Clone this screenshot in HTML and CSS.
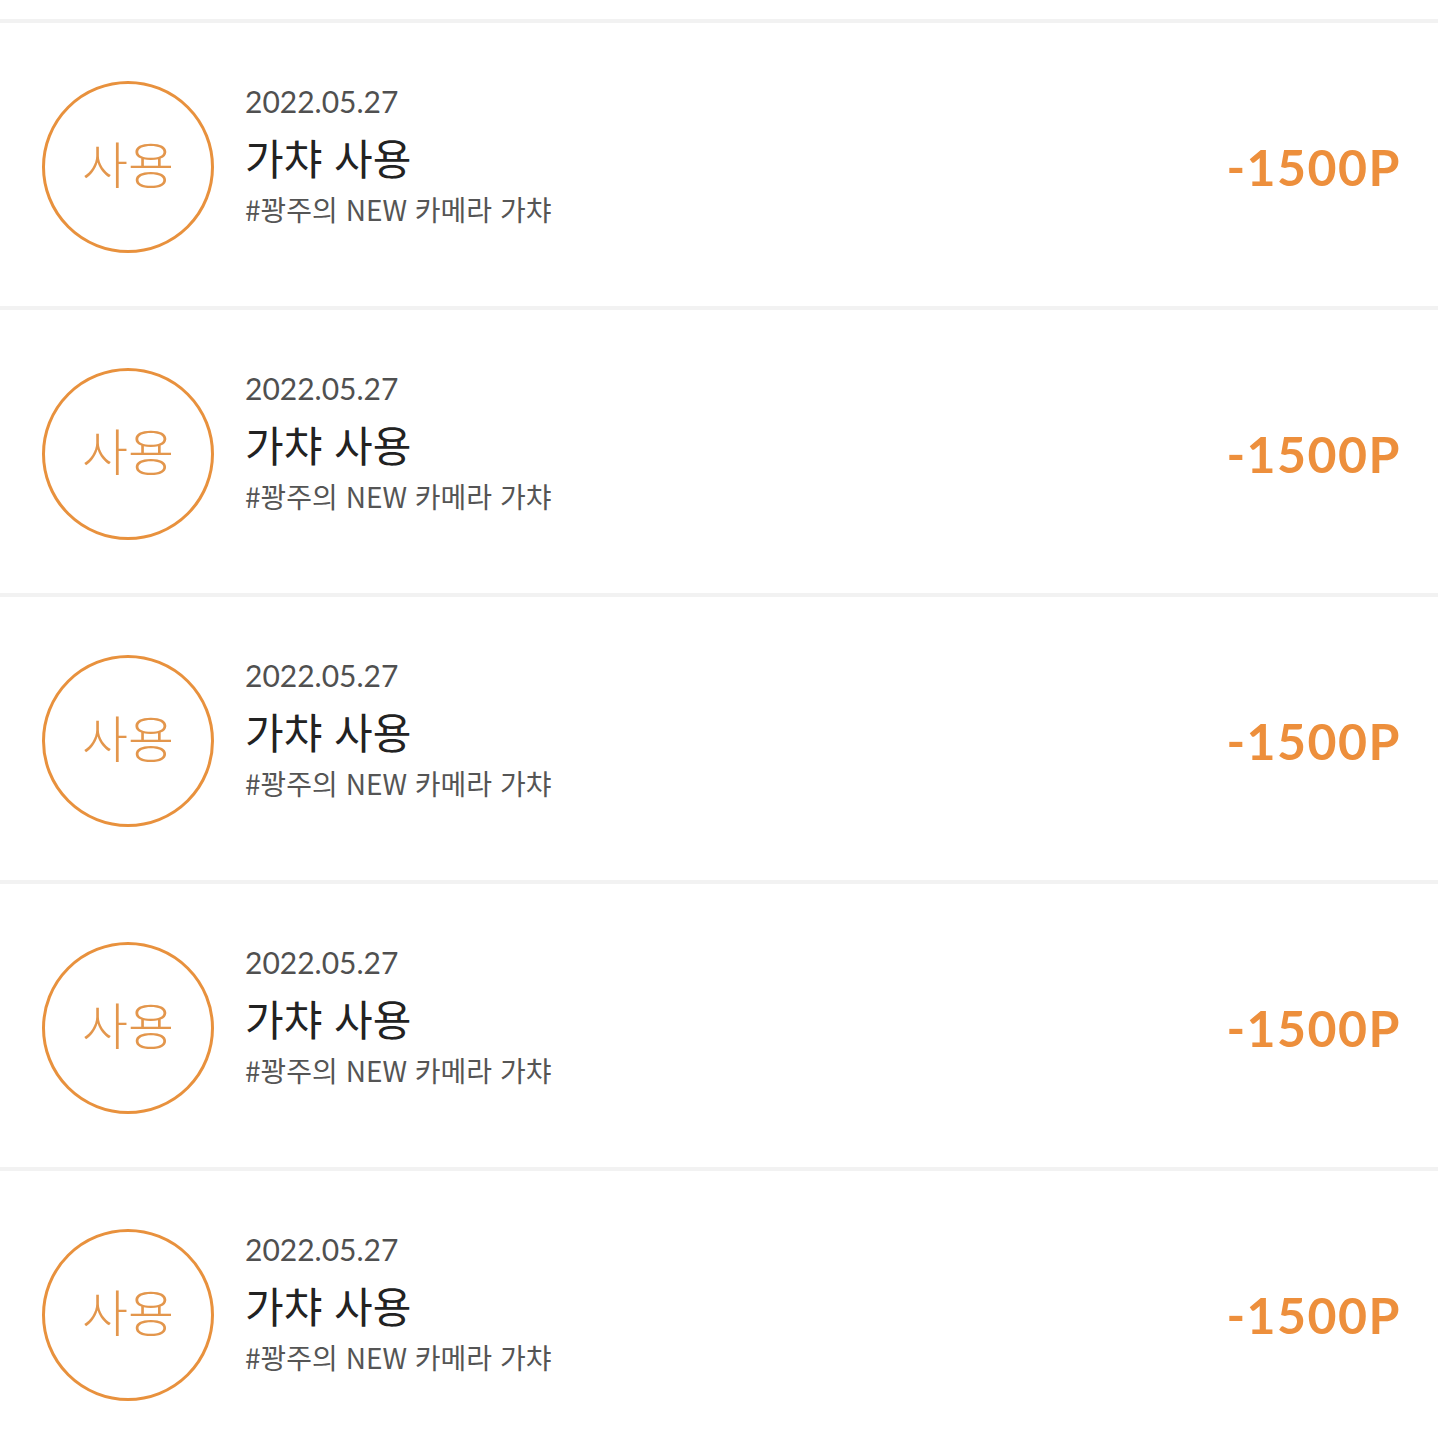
FILE: index.html
```html
<!DOCTYPE html>
<html lang="ko">
<head>
<meta charset="utf-8">
<link rel="stylesheet" href="styles.css">
</head>
<body>
<div class="top"></div>
<ul class="list">
  <li class="item">
    <div class="badge"><span>사용</span></div>
    <div class="info">
      <div class="date">2022.05.27</div>
      <div class="title">가챠 사용</div>
      <div class="tag">#꽝주의 NEW 카메라 가챠</div>
    </div>
    <div class="amount">-1500P</div>
  </li>
  <li class="item">
    <div class="badge"><span>사용</span></div>
    <div class="info">
      <div class="date">2022.05.27</div>
      <div class="title">가챠 사용</div>
      <div class="tag">#꽝주의 NEW 카메라 가챠</div>
    </div>
    <div class="amount">-1500P</div>
  </li>
  <li class="item">
    <div class="badge"><span>사용</span></div>
    <div class="info">
      <div class="date">2022.05.27</div>
      <div class="title">가챠 사용</div>
      <div class="tag">#꽝주의 NEW 카메라 가챠</div>
    </div>
    <div class="amount">-1500P</div>
  </li>
  <li class="item">
    <div class="badge"><span>사용</span></div>
    <div class="info">
      <div class="date">2022.05.27</div>
      <div class="title">가챠 사용</div>
      <div class="tag">#꽝주의 NEW 카메라 가챠</div>
    </div>
    <div class="amount">-1500P</div>
  </li>
  <li class="item">
    <div class="badge"><span>사용</span></div>
    <div class="info">
      <div class="date">2022.05.27</div>
      <div class="title">가챠 사용</div>
      <div class="tag">#꽝주의 NEW 카메라 가챠</div>
    </div>
    <div class="amount">-1500P</div>
  </li>
</ul>
</body>
</html>
```

FILE: styles.css
```css
html, body {
  margin: 0;
  padding: 0;
  background: #ffffff;
  font-family: "Noto Sans CJK KR", "Noto Sans", sans-serif;
}
.top {
  height: 19px;
}
.list {
  list-style: none;
  margin: 0;
  padding: 0;
}
.item {
  display: flex;
  align-items: center;
  height: 283px;
  border-top: 4px solid #f2f2f2;
  padding: 0 37px 0 42px;
}
.badge {
  width: 172px;
  height: 172px;
  box-sizing: border-box;
  border: 3px solid #e8913d;
  border-radius: 50%;
  display: flex;
  align-items: center;
  justify-content: center;
  flex: none;
  margin-top: 4px;
}
.badge span {
  font-family: "Noto Sans CJK KR", sans-serif;
  font-weight: 300;
  font-size: 50px;
  line-height: 1;
  color: #e3964c;
  margin-bottom: 10px;
}
.info {
  align-self: flex-start;
  margin-top: 60px;
  margin-left: 31px;
  display: flex;
  flex-direction: column;
  flex: 1;
}
.date {
  font-family: Lato, "Noto Sans", sans-serif;
  font-size: 30px;
  line-height: 36px;
  color: #505050;
}
.title {
  font-family: "Noto Sans CJK KR", sans-serif;
  font-weight: 400;
  font-size: 42px;
  line-height: 52px;
  color: #222222;
  margin-top: 12px;
}
.tag {
  font-family: "Noto Sans CJK KR", sans-serif;
  font-size: 28px;
  line-height: 36px;
  color: #555555;
  margin-top: 8px;
}
.amount {
  font-family: Lato, "Noto Sans", sans-serif;
  font-weight: 700;
  font-size: 50px;
  letter-spacing: 1.5px;
  color: #ed8f3c;
  flex: none;
  margin-top: 4px;
}
```
